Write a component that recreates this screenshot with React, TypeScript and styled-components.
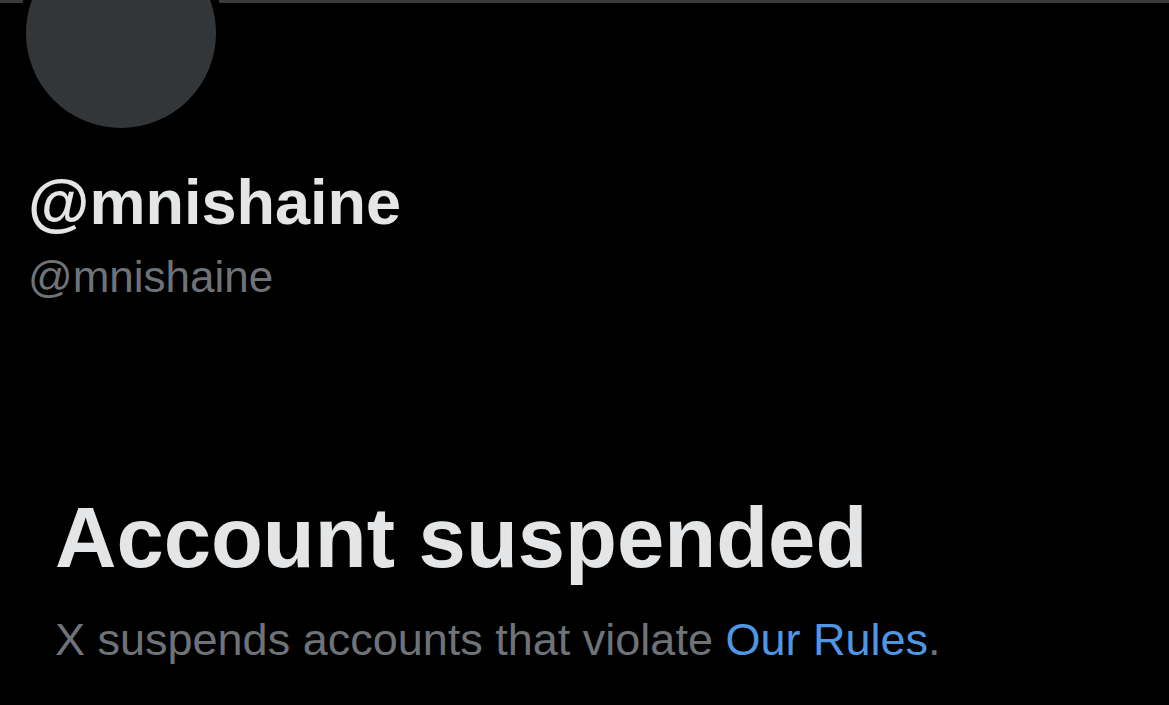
import styled, { createGlobalStyle } from "styled-components";

const GlobalStyle = createGlobalStyle`
  html, body {
    margin: 0;
    padding: 0;
    background: #000;
  }
  body {
    font-family: "Liberation Sans", Arial, sans-serif;
    color: #e7e9ea;
    overflow: hidden;
  }
`;

const Page = styled.main`
  width: 1169px;
  height: 705px;
  background: #000;
  overflow: hidden;
`;

// bottom edge of the header banner, scrolled almost out of view
const Banner = styled.div`
  height: 3px;
  background: #3a3b3e;
`;

const ProfileHead = styled.section`
  padding: 0 18px;
`;

const Avatar = styled.div`
  position: relative;
  width: 190px;
  height: 190px;
  margin-top: -73px;
  border: 8px solid #000;
  border-radius: 50%;
  background: #333639;
`;

const DisplayName = styled.h1`
  margin: 31px 0 0 10px;
  font-size: 63px;
  font-weight: 700;
  line-height: 70px;
  color: #e4e5e6;
`;

const Handle = styled.div`
  margin: 7px 0 0 10px;
  font-size: 44px;
  line-height: 66px;
  color: #6f7378;
`;

const Notice = styled.section`
  padding: 0 55px;
  margin-top: 178px;
`;

const Title = styled.h2`
  margin: 0;
  font-size: 85px;
  font-weight: 700;
  line-height: 100px;
  color: #e4e5e6;
`;

const Body = styled.p`
  margin: 22px 0 0;
  font-size: 45px;
  line-height: 60px;
  color: #6f7378;
`;

const RulesLink = styled.a`
  color: #4f97e3;
  text-decoration: none;
`;

const App: React.FC = () => {
  return (
    <Page>
      <GlobalStyle />
      <Banner />
      <ProfileHead>
        <Avatar />
        <DisplayName>@mnishaine</DisplayName>
        <Handle>@mnishaine</Handle>
      </ProfileHead>
      <Notice>
        <Title>Account suspended</Title>
        <Body>
          X suspends accounts that violate <RulesLink href="#">Our Rules</RulesLink>.
        </Body>
      </Notice>
    </Page>
  );
};

export default App;
